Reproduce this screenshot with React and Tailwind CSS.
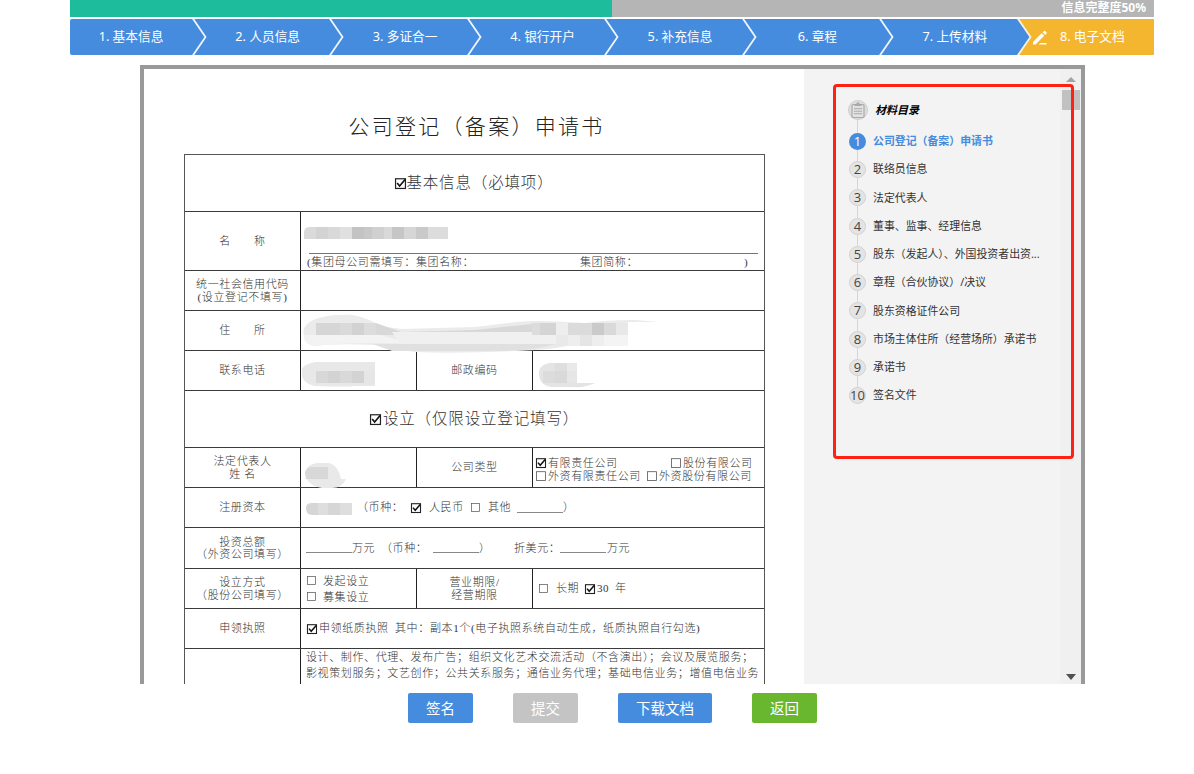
const STEPS = ['基本信息', '人员信息', '多证合一', '银行开户', '补充信息', '章程', '上传材料', '电子文档'];

const CATALOG = [
  '公司登记（备案）申请书',
  '联络员信息',
  '法定代表人',
  '董事、监事、经理信息',
  '股东（发起人）、外国投资者出资...',
  '章程（合伙协议）/决议',
  '股东资格证件公司',
  '市场主体住所（经营场所）承诺书',
  '承诺书',
  '签名文件',
];

// [x, y, width, height, shade], relative to the top left corner of the form
const MOSAIC = [
  [131, 72, 12, 12, '#d3d3d3'], [143, 72, 12, 12, '#d9d9d9'], [155, 72, 12, 12, '#e0e0e0'],
  [167, 72, 12, 12, '#c3c3c3'], [179, 72, 8, 12, '#c8c8c8'], [187, 72, 12, 12, '#d0d0d0'],
  [199, 72, 8, 12, '#d9d9d9'], [207, 72, 12, 12, '#c6c6c6'], [219, 72, 12, 12, '#d6d6d6'],
  [231, 72, 12, 12, '#c9c9c9'], [243, 72, 20, 12, '#dcdcdc'],
  [131, 168, 24, 12, '#d6d6d6'], [155, 168, 12, 12, '#dadada'], [167, 168, 12, 12, '#d2d2d2'],
  [179, 168, 12, 12, '#dcdcdc'],
  [347, 168, 8, 12, '#dcdcdc'], [355, 168, 16, 12, '#d4d4d4'], [371, 168, 12, 12, '#eeeeee'],
  [383, 168, 24, 12, '#dbdbdb'], [407, 168, 12, 12, '#cacaca'], [419, 168, 12, 12, '#d9d9d9'],
  [431, 168, 12, 12, '#e8e8e8'],
  [371, 180, 12, 11, '#e9e9e9'], [383, 180, 12, 11, '#eeeeee'], [395, 180, 12, 11, '#e5e5e5'],
  [407, 180, 12, 11, '#eeeeee'], [419, 180, 24, 11, '#f4f4f4'],
  [131, 216, 12, 12, '#d8d8d8'], [143, 216, 12, 12, '#d3d3d3'], [155, 216, 12, 12, '#d9d9d9'],
  [167, 216, 12, 12, '#d3d3d3'], [179, 216, 11, 13, '#e6e6e6'],
  [370, 208, 12, 8, '#dedede'], [382, 208, 10, 8, '#e9e9e9'], [370, 216, 12, 12, '#d9d9d9'],
  [382, 216, 10, 12, '#e6e6e6'], [358, 216, 12, 12, '#dcdcdc'],
];

function Chevron({ active }) {
  return (
    <svg className="absolute top-0 left-0" width="15" height="36" viewBox="0 0 15 36">
      <path d="M0 0L13 18L0 36Z" fill="#458cdf" />
      <path d="M0.5 -1L13.5 18L0.5 37" fill="none" stroke={active ? '#f4f0e4' : '#eef5fd'} strokeWidth="1.8" />
    </svg>
  );
}

function Pen() {
  return (
    <svg className="absolute left-[15px] top-[11px]" width="16" height="16" viewBox="0 0 16 16" fill="#fff">
      <path d="M1 12L9.7 3.3L12.2 5.8L3.5 14.5H1Z" />
      <path d="M10.6 2.4L12 1Q12.6.5 13.2 1L14.5 2.3Q15 2.9 14.5 3.5L13.1 4.9Z" />
      <path d="M8.3 13L6.8 14.5H14.5V13Z" />
    </svg>
  );
}

function Box({ checked, size = 10 }) {
  return (
    <svg className="inline-block shrink-0 overflow-visible" width={size} height={size} viewBox="0 0 10 10" fill="none">
      <rect x="0.5" y="0.7" width="9" height="8.8" stroke={checked ? '#222' : '#555'} strokeWidth={checked ? 1.1 : 0.8} />
      {checked && <path d="M2 4.6L4.2 7.3L9.2 1.4" stroke="#111" strokeWidth="1.5" />}
    </svg>
  );
}

function Row({ className, children }) {
  return <div className={`flex border-b border-[#3a3a3a] ${className}`}>{children}</div>;
}

function Label({ lines }) {
  return (
    <div className="w-[116px] shrink-0 border-r border-[#222] flex flex-col items-center justify-center text-center leading-[12.4px]">
      {lines.map(l => (
        <span key={l} className="whitespace-pre">{l}</span>
      ))}
    </div>
  );
}

function Redactions() {
  return (
    <svg className="absolute top-0 left-0" width="581" height="530" viewBox="0 0 581 530">
      <path d="M119 78Q119 72 124 72H131V84H119Z" fill="#dadada" />
      <path d="M119 173Q123 165 138 162Q150 159 168 160Q180 162 196 171L216 174L290 172L331 167L347 166Q370 166 380 167L400 168Q420 165 450 165L474 167H443V190H386Q370 194 350 195Q280 199 230 197Q210 194 190 190Q150 188 130 191Q116 188 119 173Z" fill="#ebebeb" />
      <path d="M119 184V180H195L220 187H370V190L190 188Q150 188 130 191Q121 190 119 184Z" fill="#f3f3f3" />
      <path d="M191 168L216 177L290 175L347 169V180H191Z" fill="#d8d8d8" />
      <path d="M207 177H371V189H215Z" fill="#f0f0f0" />
      <path d="M188 189H372Q350 195 320 196H207Z" fill="#e0e0e0" />
      <path d="M117 214Q119 209 130 207H190V231H170Q160 232 130 231Q117 228 117 219Z" fill="#e8e8e8" />
      <path d="M354 216Q356 209 365 208H392V228H410Q400 233 388 232H366Q353 230 354 216Z" fill="#e4e4e4" />
      {MOSAIC.map(([x, y, w, h, fill]) => (
        <rect key={`${x}-${y}`} x={x} y={y} width={w} height={h} fill={fill} />
      ))}
      <path d="M120 318Q122 309 132 308H144Q153 310 156 324H161Q157 333 147 333H137Q122 331 120 318Z" fill="#e9e9e9" />
      <path d="M120 318Q121 313 125 312H143V324H121Z" fill="#d8d8d8" />
      <path d="M121 353Q121 348 127 348H167V360H127Q121 360 121 353Z" fill="#d6d6d6" />
      <path d="M133 348H143V360H133ZM155 348H167V360H155Z" fill="#dedede" />
    </svg>
  );
}

function Form() {
  return (
    <div className="relative w-[581px] border-t border-x border-[#555] text-[11px] tracking-[0.62px] text-[#333] font-light whitespace-nowrap">
      <Row className="h-[57px] items-center justify-center text-[15.5px] tracking-[0.85px]">
        <Box checked size={11} />
        <span>基本信息（必填项）</span>
      </Row>
      <Row className="h-[59px]">
        <Label lines={['名　　称']} />
        <div className="flex flex-1 flex-col justify-end pl-[6px]">
          <div className="ml-[2px] mr-[6px] border-t border-[#e0474a]" />
          <div className="flex h-4 items-center">
            <span className="w-[109px]">(集团母公司需填写：</span>
            <span className="w-[164px]">集团名称：</span>
            <span className="w-[164px]">集团简称：</span>
            <span>)</span>
          </div>
        </div>
      </Row>
      <Row className="h-[40px]">
        <Label lines={['统一社会信用代码', '(设立登记不填写)']} />
      </Row>
      <Row className="h-[40px]">
        <Label lines={['住　　所']} />
      </Row>
      <Row className="h-[40px]">
        <Label lines={['联系电话']} />
        <div className="w-[116px] border-r border-[#222]" />
        <Label lines={['邮政编码']} />
      </Row>
      <Row className="h-[57px] items-center justify-center text-[15.5px] tracking-[0.85px]">
        <Box checked size={11} />
        <span className="ml-0.5">设立（仅限设立登记填写）</span>
      </Row>
      <Row className="h-[40px]">
        <Label lines={['法定代表人', '姓 名']} />
        <div className="w-[116px] border-r border-[#222]" />
        <Label lines={['公司类型']} />
        <div className="flex flex-1 flex-col justify-center pl-[3px] pt-1 leading-[12.4px]">
          <div className="flex items-center">
            <Box checked />
            <span className="ml-[2px] w-[123px]">有限责任公司</span>
            <Box />
            <span className="ml-[2px]">股份有限公司</span>
          </div>
          <div className="flex items-center">
            <Box />
            <span className="ml-[2px] w-[99px]">外资有限责任公司</span>
            <Box />
            <span className="ml-[2px]">外资股份有限公司</span>
          </div>
        </div>
      </Row>
      <Row className="h-[40px]">
        <Label lines={['注册资本']} />
        <div className="flex items-center pl-[56px]">
          <span className="w-[54px]">（币种：</span>
          <Box checked />
          <span className="ml-[8px] w-[42px]">人民币</span>
          <Box size={9} />
          <span className="ml-[8px] w-[29px]">其他</span>
          <span className="mt-[9px] w-[46px] border-b border-[#888]" />
          <span>）</span>
        </div>
      </Row>
      <Row className="h-[41px]">
        <Label lines={['投资总额', '（外资公司填写）']} />
        <div className="flex items-center pl-[5px]">
          <span className="mt-[9px] w-[46px] border-b border-[#888]" />
          <span className="w-[29px]">万元</span>
          <span className="w-[52px]">（币种：</span>
          <span className="mt-[9px] w-[46px] border-b border-[#888]" />
          <span className="w-[35px]">）</span>
          <span className="w-[46px]">折美元：</span>
          <span className="mt-[9px] w-[46px] border-b border-[#888]" />
          <span className="ml-px">万元</span>
        </div>
      </Row>
      <Row className="h-[40px]">
        <Label lines={['设立方式', '（股份公司填写）']} />
        <div className="flex w-[116px] flex-col justify-center border-r border-[#222] pl-[6px] leading-[16px]">
          <div className="flex items-center gap-[7px]">
            <Box size={9} />
            <span>发起设立</span>
          </div>
          <div className="flex items-center gap-[7px]">
            <Box size={9} />
            <span>募集设立</span>
          </div>
        </div>
        <Label lines={['营业期限/', '经营期限']} />
        <div className="flex items-center pl-[6px]">
          <Box size={9} />
          <span className="ml-[8px] w-[29px]">长期</span>
          <Box checked />
          <span className="ml-[2px] w-[18px]">30</span>
          <span>年</span>
        </div>
      </Row>
      <Row className="h-[40px]">
        <Label lines={['申领执照']} />
        <div className="flex items-center pl-[6px]">
          <Box checked />
          <span className="ml-[2px] w-[76px]">申领纸质执照</span>
          <span className="w-[35px]">其中：</span>
          <span>副本1个(电子执照系统自动生成，纸质执照自行勾选)</span>
        </div>
      </Row>
      <div className="flex h-[60px]">
        <div className="w-[116px] shrink-0 border-r border-[#222]" />
        <div className="pl-[5px] leading-[16px]">
          <p>设计、制作、代理、发布广告；组织文化艺术交流活动（不含演出）；会议及展览服务；</p>
          <p>影视策划服务；文艺创作；公共关系服务；通信业务代理；基础电信业务；增值电信业务</p>
        </div>
      </div>
      <Redactions />
    </div>
  );
}

function Catalog() {
  return (
    <div className="relative flex-1 pl-[44px] pt-[31px]">
      <div className="absolute left-[53px] top-[42px] h-[280px] w-px bg-[#d6d6d6]" />
      <div className="relative flex h-[20px] items-center">
        <svg width="20" height="20" viewBox="0 0 20 20">
          <circle cx="10" cy="10" r="9.5" fill="#dedede" stroke="#cfcfcf" />
          <rect x="4" y="4.5" width="12" height="13" rx="1" fill="#e2e2e2" stroke="#aaa" strokeWidth="1.2" />
          <path d="M6.5 6V4.2H8.2Q8.5 2.3 10 2.3T11.8 4.2H13.5V6Z" fill="#a8a8a8" />
          <path d="M6 8.7H14M6 11.2H14M6 13.7H14" stroke="#aaa" />
        </svg>
        <span className="ml-[7px] text-[11px] font-bold italic text-black">材料目录</span>
      </div>
      <ul className="relative mt-[7.3px]">
        {CATALOG.map((name, i) => (
          <li key={name} className="flex h-[28.25px] items-center">
            <span
              className={`ml-px flex size-[17px] shrink-0 items-center justify-center rounded-full font-['Open_Sans'] text-[13px] leading-none ${
                i === 0 ? 'bg-[#458cdf] text-white' : 'border border-[#d2d2d2] bg-[#e4e4e4] text-[#444]'
              }`}
            >
              {i + 1}
            </span>
            <span
              className={`ml-[7px] whitespace-nowrap text-[10.9px] ${i === 0 ? 'font-bold text-[#458cdf]' : 'text-[#333]'}`}
            >
              {name}
            </span>
          </li>
        ))}
      </ul>
      {/* Highlight frame, reaches over the scrollbar */}
      <div className="absolute left-[29px] top-[15px] z-10 h-[375px] w-[241px] rounded-[4px] border-3 border-[#ff2213]" />
    </div>
  );
}

function Scrollbar() {
  return (
    <div className="flex w-[21px] flex-col items-center justify-between bg-[#f0f0f0] pb-[4px] pt-[8px]">
      <div className="flex flex-col items-center">
        <svg width="10" height="5" viewBox="0 0 10 5"><path d="M0 5L5 0L10 5Z" fill="#a3a3a3" /></svg>
        <div className="mt-[8px] h-[20px] w-[18px] bg-[#c1c1c1]" />
      </div>
      <svg width="10" height="6" viewBox="0 0 10 6"><path d="M0 0H10L5 6Z" fill="#505050" /></svg>
    </div>
  );
}

function Button({ className, children }) {
  return (
    <button className={`h-[30px] rounded-[2px] text-[14.5px] leading-none text-white ${className}`}>{children}</button>
  );
}

export default function App() {
  return (
    <div className="h-[774px] w-[1194px] overflow-hidden bg-white font-['Noto_Sans','Noto_Sans_CJK_SC',sans-serif]">
      <div className="ml-[70px] w-[1084px]">
        {/* Completeness bar */}
        <div className="flex h-[17px] bg-[#b5b5b5]">
          <div className="w-[542px] bg-[#1dbc9c]" />
          <div className="flex flex-1 items-center justify-end pr-[8px] pb-[2px] text-[12px] font-bold leading-none text-white">
            信息完整度50%
          </div>
        </div>

        <div className="mt-[2px] flex h-[36px] overflow-hidden rounded-[2px] bg-[#458cdf] text-[12.7px] text-white">
          {STEPS.map((name, i) => (
            <div
              key={name}
              className={`relative flex items-center justify-center ${i === 0 ? 'w-[122px] shrink-0' : 'flex-1 pl-[14px]'} ${
                i === 7 ? 'bg-[#f5b62f]' : ''
              }`}
            >
              {i > 0 && <Chevron active={i === 7} />}
              {i === 7 && <Pen />}
              <span>{i + 1}. {name}</span>
            </div>
          ))}
        </div>
      </div>

      {/* Document viewer */}
      <div className="ml-[140px] mt-[10px] flex h-[619px] w-[945px] overflow-hidden border-x-[4px] border-t-[4px] border-[#999]">
        <div className="w-[660px] overflow-hidden pl-[40px] font-['Liberation_Serif','Noto_Sans_CJK_SC',serif]">
          <h1 className="mt-[43px] h-[30px] w-[585px] whitespace-nowrap text-center text-[21px] font-light leading-[30px] tracking-[2.3px] text-[#222]">
            公司登记（备案）申请书
          </h1>
          <div className="mt-[12px]">
            <Form />
          </div>
        </div>
        <div className="relative flex flex-1 bg-[#f3f3f3]">
          <Catalog />
          <Scrollbar />
        </div>
      </div>

      <div className="ml-[408px] mt-[9px] flex">
        <Button className="w-[65px] bg-[#458cdf]">签名</Button>
        <Button className="ml-[40px] w-[65px] bg-[#c4c4c4]">提交</Button>
        <Button className="ml-[40px] w-[94px] bg-[#458cdf]">下载文档</Button>
        <Button className="ml-[40px] w-[65px] bg-[#68b72f]">返回</Button>
      </div>
    </div>
  );
}
